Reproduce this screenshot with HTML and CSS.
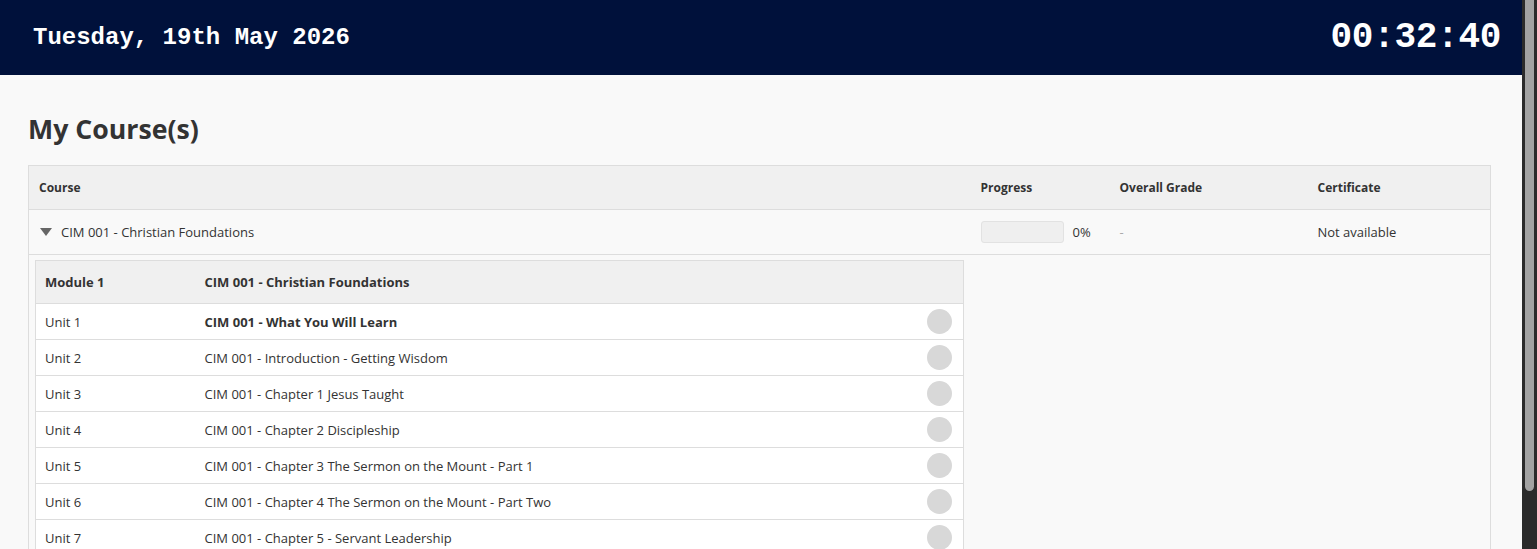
FILE: index.html
```html
<!DOCTYPE html>
<html lang="en">
<head>
<meta charset="utf-8">
<title>My Course(s)</title>
<link rel="stylesheet" href="styles.css">
</head>
<body>
<div class="viewport">
<div class="page">
<header class="topbar">
  <div class="date">Tuesday, 19th May 2026</div>
  <div class="clock">00:32:40</div>
</header>
<main class="content">
  <h1 class="title">My Course(s)</h1>
  <table class="courses">
    <colgroup>
      <col class="c-course"><col class="c-progress"><col class="c-grade"><col class="c-cert">
    </colgroup>
    <thead>
      <tr><th>Course</th><th>Progress</th><th>Overall Grade</th><th>Certificate</th></tr>
    </thead>
    <tbody>
      <tr class="course-row">
        <td><span class="caret"></span>CIM 001 - Christian Foundations</td>
        <td><div class="prog"><div class="bar"></div><span>0%</span></div></td>
        <td class="muted">-</td>
        <td>Not available</td>
      </tr>
      <tr class="detail-row">
        <td class="detail-cell">
          <table class="units">
            <thead>
              <tr><th class="u-col">Module 1</th><th>CIM 001 - Christian Foundations</th><th class="s-col"></th></tr>
            </thead>
            <tbody>
              <tr><td class="u-col">Unit 1</td><td class="strong">CIM 001 - What You Will Learn</td><td class="s-col"><span class="dot"></span></td></tr>
              <tr><td class="u-col">Unit 2</td><td>CIM 001 - Introduction - Getting Wisdom</td><td class="s-col"><span class="dot"></span></td></tr>
              <tr><td class="u-col">Unit 3</td><td>CIM 001 - Chapter 1 Jesus Taught</td><td class="s-col"><span class="dot"></span></td></tr>
              <tr><td class="u-col">Unit 4</td><td>CIM 001 - Chapter 2 Discipleship</td><td class="s-col"><span class="dot"></span></td></tr>
              <tr><td class="u-col">Unit 5</td><td>CIM 001 - Chapter 3 The Sermon on the Mount - Part 1</td><td class="s-col"><span class="dot"></span></td></tr>
              <tr><td class="u-col">Unit 6</td><td>CIM 001 - Chapter 4 The Sermon on the Mount - Part Two</td><td class="s-col"><span class="dot"></span></td></tr>
              <tr><td class="u-col">Unit 7</td><td>CIM 001 - Chapter 5 - Servant Leadership</td><td class="s-col"><span class="dot"></span></td></tr>
            </tbody>
          </table>
        </td>
        <td></td><td></td><td></td>
      </tr>
    </tbody>
  </table>
</main>
</div>
<div class="scrollbar"><div class="thumb"></div></div>
</div>
</body>
</html>
```

FILE: styles.css
```css
* { box-sizing: border-box; }
html, body { margin: 0; padding: 0; }
body {
  background: #f9f9f9;
  color: #333;
  font-family: "Open Sans", "Noto Sans", sans-serif;
  font-size: 13px;
  overflow: hidden;
}
.viewport {
  display: flex;
  height: 100vh;
}
.page {
  flex: 1;
  min-width: 0;
  overflow: hidden;
}
.scrollbar {
  width: 15px;
  flex: none;
  background: #2b2b2b;
  padding: 0 3px;
}
.thumb {
  height: 491px;
  background: #a3a3a3;
  border-radius: 0 0 5px 5px;
}
.topbar {
  height: 75px;
  background: #00113b;
  color: #fff;
  display: flex;
  align-items: center;
  justify-content: space-between;
  padding: 0 21px 0 33px;
  font-family: "Liberation Mono", "Courier New", monospace;
  font-weight: bold;
}
.date { font-size: 24px; }
.clock { font-size: 36px; letter-spacing: -0.3px; }
.content { padding: 0 32px 40px 28px; }
.title {
  margin: 0;
  padding: 34px 0 16px 0;
  font-size: 26.7px;
  line-height: 40px;
  font-weight: 700;
  color: #333;
}
table { border-collapse: collapse; }
.courses {
  width: 1462px;
  table-layout: fixed;
  border: 1px solid #ddd;
}
.c-course { width: 942px; }
.c-progress { width: 139px; }
.c-grade { width: 198px; }
.c-cert { width: 183px; }
.courses > thead th {
  background: #f0f0f0;
  text-align: left;
  font-size: 12px;
  font-weight: 700;
  height: 44px;
  padding: 0 10px;
  border-bottom: 1px solid #ddd;
}
.course-row td {
  height: 45px;
  padding: 0 10px;
  border-bottom: 1px solid #ddd;
  vertical-align: middle;
}
.caret {
  display: inline-block;
  width: 0; height: 0;
  border-left: 6px solid transparent;
  border-right: 6px solid transparent;
  border-top: 8px solid #666;
  margin: 0 9px 0 1px;
  vertical-align: 1px;
}
.prog { display: flex; align-items: center; gap: 9px; }
.bar {
  width: 83px; height: 22px;
  background: #efefef;
  border: 1px solid #e2e2e2;
  border-radius: 3px;
}
.muted { color: #aaa; }
.detail-cell { padding: 5px 6px 0 6px; vertical-align: top; }
.units {
  width: 929px;
  border: 1px solid #ddd;
  background: #fff;
}
.units th {
  background: #f0f0f0;
  text-align: left;
  font-weight: 700;
  height: 43px;
  padding: 0 10px;
  border-bottom: 1px solid #ddd;
}
.units td {
  height: 36px;
  padding: 0 10px;
  border-bottom: 1px solid #ddd;
}
.units .strong { font-weight: 700; }
.units .u-col { width: 159px; padding-left: 9px; }
.s-col { width: 40px; text-align: right; }
.units td.s-col { padding: 0 11px 0 0; }
.dot {
  display: inline-block;
  width: 25px; height: 25px;
  border-radius: 50%;
  background: #d8d8d8;
  vertical-align: middle;
}
```
